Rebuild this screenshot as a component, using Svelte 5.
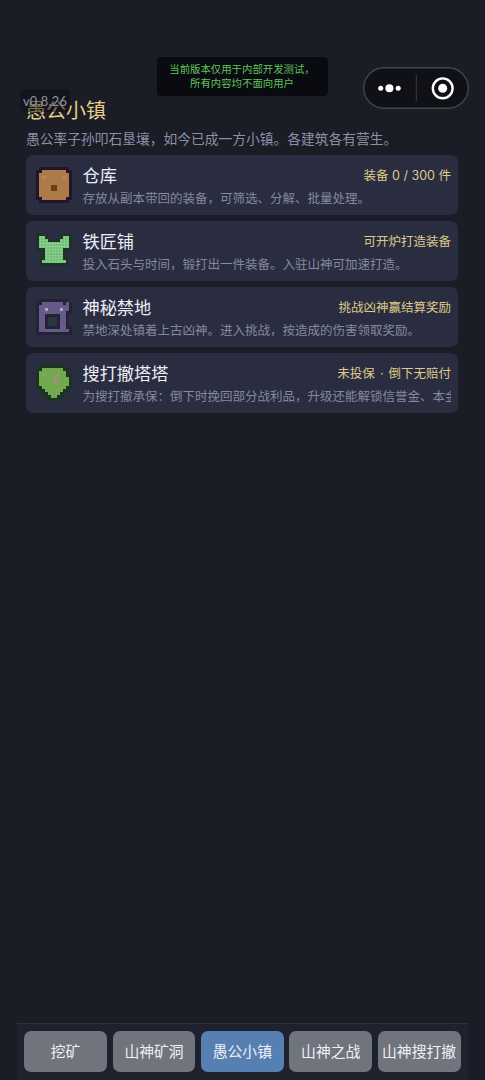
<script>
  const palettes = {
    store: { o: '#24122e', b: '#ab7b48', e: '#d07a78', m: '#69401d' },
    smith: { o: '#1e3027', b: '#6fbe79', e: '#79c982', m: '#79c982' },
    gate: { o: '#242335', b: '#665a88', e: '#b5a2c4', m: '#2b3441' },
    tower: { o: '#1b3420', b: '#72a94f', e: '#8d9a96', m: '#c07d98' }
  };
  const sprites = {
    store: [
      '.oooooooooo.',
      'oobbbbbbbboo',
      'obbbbbbbbbbo',
      'obebbbbbbebo',
      'obbbbbbbbbbo',
      'obbbbbbbbbbo',
      'obbbbmmbbbbo',
      'obbbbmmbbbbo',
      'obbbbbbbbbbo',
      'obbbbbbbbbbo',
      'oobbbbbbbboo',
      '.oooooooooo.'
    ],
    smith: [
      'oooo....oooo',
      'obbo....obbo',
      'obbboooobbbo',
      'obbbbbbbbbbo',
      'obbbbbbbbbbo',
      'ooobbbbbbooo',
      '..obbbbbbo..',
      '..obbbbbbo..',
      '.oobbbbbboo.',
      '.obbbbbbbbo.',
      '.oooooooooo.',
      '............'
    ],
    gate: [
      '.oooooooooo.',
      'oobbbbbbbobo',
      'obbbbbbbbbbo',
      'obbebbbbebbo',
      'obbbbbbbbboo',
      'obbooooobbo.',
      'obbommmobbo.',
      'obbommmobbo.',
      'obbommmobbo.',
      'obbooooobboo',
      'obbbbbbbbbbo',
      'oooooooooooo'
    ],
    tower: [
      '.ooooooooo..',
      'oobbbbbbboo.',
      'obbbbbbbbbo.',
      'obebbbbebboo',
      'obbbbbmbbbbo',
      'obbbbbmbbbbo',
      'obbbbbbbbbbo',
      'oobbbbbbbboo',
      '.oobbbbbboo.',
      '..oobbbboo..',
      '...oobboo...',
      '....oooo....'
    ]
  };
  const buildings = [
    { icon: 'store', name: '仓库', status: '装备 0 / 300 件', text: '存放从副本带回的装备，可筛选、分解、批量处理。' },
    { icon: 'smith', name: '铁匠铺', status: '可开炉打造装备', text: '投入石头与时间，锻打出一件装备。入驻山神可加速打造。' },
    { icon: 'gate', name: '神秘禁地', status: '挑战凶神赢结算奖励', text: '禁地深处镇着上古凶神。进入挑战，按造成的伤害领取奖励。' },
    { icon: 'tower', name: '搜打撤塔塔', status: '未投保 · 倒下无赔付', text: '为搜打撤承保：倒下时挽回部分战利品，升级还能解锁信誉金、本金', wide: true }
  ];
  const tabs = ['挖矿', '山神矿洞', '愚公小镇', '山神之战', '山神搜打撤'];
  const active = 2;
</script>

<div class="app">
  <div class="notice">当前版本仅用于内部开发测试，<br />所有内容均不面向用户</div>
  <div class="capsule">
    <svg width="106" height="42" viewBox="0 0 106 42">
      <rect x=".75" y=".75" width="104.5" height="40.5" rx="20.25" fill="#101116" stroke="#45464e" stroke-width="1.3" />
      <g fill="#fff">
        <circle cx="17.7" cy="21.3" r="2.5" /><circle cx="26.4" cy="21.3" r="4" /><circle cx="35.2" cy="21.3" r="2.5" />
        <circle cx="79.7" cy="21.3" r="4.5" />
      </g>
      <path d="M53.3 8v26" stroke="#383940" stroke-width="1.1" />
      <circle cx="79.7" cy="21.3" r="9.9" fill="none" stroke="#fff" stroke-width="2.4" />
    </svg>
  </div>
  <div class="version">v0.8.26</div>

  <main>
    <h1>愚公小镇</h1>
    <p class="intro">愚公率子孙叩石垦壤，如今已成一方小镇。各建筑各有营生。</p>
    <div class="list">
      {#each buildings as b}
        <section class="card">
          <svg class="sprite" viewBox="0 0 12 12" shape-rendering="crispEdges">
            {#each sprites[b.icon] as row, y}
              {#each row.split('') as c, x}
                {#if c !== '.'}<rect {x} {y} width="1" height="1" fill={palettes[b.icon][c]} />{/if}
              {/each}
            {/each}
            {#if b.icon === 'smith'}
              <g stroke="#a2dca1" stroke-width=".22" opacity=".65" shape-rendering="auto">
                {#each [3.5, 4.5, 5.5, 6.5, 7.5, 8.5] as p}
                  <path d="M{p} 3v7M3 {p}h6" />
                {/each}
                <path d="M1.5 1v4M2.5 1v4M9.5 1v4M10.5 1v4M1 1.5h2M9 1.5h2M1 2.5h3M8 2.5h3M1 3.5h10M1 4.5h10M2 9.5h8" />
              </g>
            {/if}
          </svg>
          <div class="copy">
            <div class="heading"><h2>{b.name}</h2><span class:wide={b.wide}>{b.status}</span></div>
            <p>{b.text}</p>
          </div>
        </section>
      {/each}
    </div>
  </main>

  <nav>
    {#each tabs as tab, i}
      <button class:active={i === active}>{tab}</button>
    {/each}
  </nav>
</div>

<style>
  :global(body) { background: #1a1c26; }
  .app {
    position: relative;
    box-sizing: border-box;
    display: flex;
    flex-direction: column;
    height: 1080px;
    padding: 96px 17px 0;
    overflow: hidden;
    background: #1a1c26;
    font-family: "Noto Sans CJK SC", sans-serif;
    font-weight: 400;
  }
  h1, h2, p { margin: 0; font-weight: 400; }
  .notice {
    position: absolute;
    left: 157px;
    top: 57px;
    box-sizing: border-box;
    width: 171px;
    height: 39px;
    padding: 5px 1px 0 0;
    border-radius: 4px;
    background: #090b11;
    color: #62c35b;
    font-size: 10.4px;
    line-height: 13.7px;
    text-align: center;
    white-space: nowrap;
  }
  .capsule { position: absolute; left: 363px; top: 67px; }
  .capsule svg { display: block; }
  .version {
    position: absolute;
    z-index: 1;
    left: 20px;
    top: 89px;
    box-sizing: border-box;
    width: 50px;
    height: 23px;
    padding-left: 3px;
    border-radius: 5px;
    background: rgba(12, 13, 18, .5);
    color: #9194a2;
    font-family: Lato, sans-serif;
    font-size: 12.8px;
    letter-spacing: .25px;
    line-height: 24px;
  }
  main { flex: 1; padding: 0 10px 0 9px; }
  h1 { color: #e5cf86; font-size: 20px; line-height: 28px; }
  .intro { margin-top: 4px; height: 27px; color: #8c90a7; font-size: 13.75px; line-height: 20px; white-space: nowrap; }
  .list { display: flex; flex-direction: column; gap: 6px; }
  .card {
    box-sizing: border-box;
    display: flex;
    height: 60px;
    padding: 7px 7px 0 10.4px;
    border-radius: 7px;
    background: #2a2d40;
  }
  .sprite { flex: none; width: 36px; height: 36px; margin-top: 5px; }
  .copy { flex: 1; min-width: 0; margin-left: 10.1px; }
  .heading { display: flex; justify-content: space-between; align-items: center; height: 26px; }
  h2 { color: #eceef8; font-size: 17.2px; line-height: 26px; }
  .heading span {
    margin-top: 1px;
    color: #dfca89;
    font: 400 12.5px/20px Inter, "Noto Sans CJK SC", sans-serif;
    white-space: pre;
  }
  .heading .wide { word-spacing: 1.5px; }
  .card p { overflow: hidden; color: #85899d; font-size: 12.5px; line-height: 20px; white-space: nowrap; }
  nav {
    box-sizing: border-box;
    display: grid;
    grid-template-columns: repeat(5, 1fr);
    gap: 5.5px;
    height: 57px;
    padding: 7px 7.5px 8px 7.2px;
    border-top: 1px solid #2d303b;
    background: #1f222e;
  }
  button {
    min-width: 0;
    padding: 0 0 1px;
    border: 0;
    border-radius: 7px;
    background: #6f747d;
    color: #eff1f5;
    font: 400 14.8px/40px "Noto Sans CJK SC", sans-serif;
    white-space: nowrap;
  }
  .active { background: #5680b2; }
</style>
